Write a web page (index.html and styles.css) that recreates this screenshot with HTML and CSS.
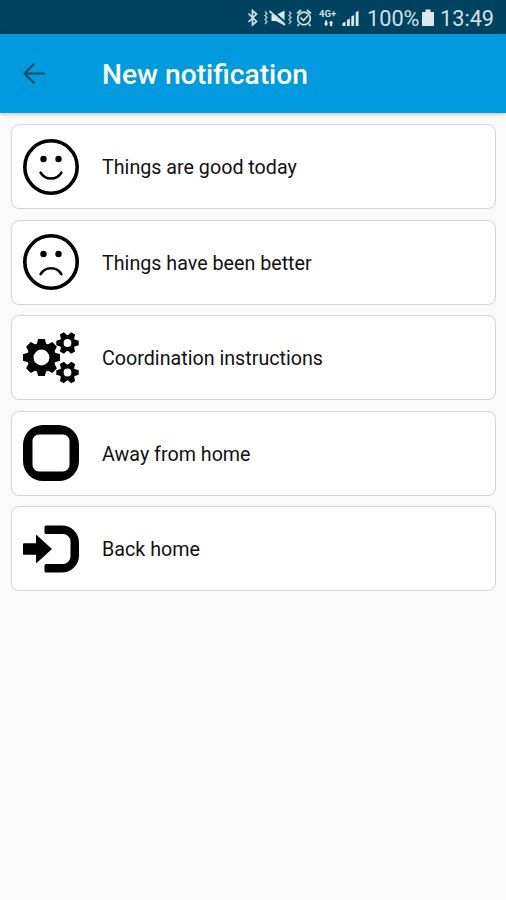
FILE: index.html
```html
<!DOCTYPE html>
<html lang="en">
<head>
<meta charset="utf-8">
<title>New notification</title>
<link rel="stylesheet" href="styles.css">
</head>
<body>
<div class="status">
  <svg class="status-icons" viewBox="0 0 118 34" width="118" height="34">
    <path class="line" d="M2.500 13.500L10.500 21.500L6.500 25V10.500L10.500 14L2.500 22"/>
    <path class="thin" d="M19 11.500l2 2-2 2 2 2-2 2 2 2-2 2.500M43 11.500l2 2-2 2 2 2-2 2 2 2-2 2.500"/>
    <path class="fill" d="M25.500 15h4.500l8.500-4.500v15l-8.500-4.500h-4.500z"/>
    <path class="cut" d="M25.500 10l15 13.500"/>
    <path class="line" d="M23.500 11l15.500 14"/>
    <circle class="line" cx="58" cy="18.500" r="6.300"/>
    <path class="line" d="M51 13.500l4-3.500M65 13.500l-4-3.500M53 24l-1.500 2M63 24l1.500 2M54.500 17.500l3 3 4.500-5"/>
    <text class="net" x="73" y="17">4G+</text>
    <path class="fill" d="M79 20.500h2.200v3h1.200l-2.300 2.800-2.300-2.800H79zM84 26.300h2.200v-3h1.200l-2.300-2.800-2.300 2.800H84z"/>
    <path class="fill" d="M96.500 26v-3l3-1.200V26zM101 26v-6l2.800-1.500V26zM105.300 26v-9.500l2.800-1.500V26zM109.700 26V12.500l2.800-2V26z"/>
  </svg>
  <span class="percent">100%</span>
  <svg class="battery" viewBox="0 0 14 34" width="14" height="34"><path class="fill" d="M1 12h3.500V9.500h5V12H13v14H1z"/></svg>
  <span class="clock">13:49</span>
</div>
<header class="bar">
  <svg class="back" viewBox="0 0 24 24" width="24" height="24"><path d="M23 11.500H2.500M12.500 1.500L2.500 11.500l10 10"/></svg>
  <h1>New notification</h1>
</header>
<main class="list">
  <div class="card">
    <svg class="icon" viewBox="0 0 56 56"><circle class="face" cx="28" cy="28" r="26.200"/><circle cx="20.500" cy="20" r="3.200"/><circle cx="35.500" cy="20" r="3.200"/><path class="mouth" d="M17.600 33.600Q21 39.500 28 39.500T38.400 33.600"/></svg>
    <span>Things are good today</span>
  </div>
  <div class="card">
    <svg class="icon" viewBox="0 0 56 56"><circle class="face" cx="28" cy="28" r="26.200"/><circle cx="20.500" cy="20" r="3.200"/><circle cx="35.500" cy="20" r="3.200"/><path class="mouth" d="M17.600 40.200Q21 34.300 28 34.300T38.400 40.200"/></svg>
    <span>Things have been better</span>
  </div>
  <div class="card">
    <svg class="icon" viewBox="0 0 56 56">
      <defs>
        <path id="tooth" d="M-5.200-12L-3.300-18.500H3.300L5.200-12z"/>
        <path id="cog" d="M-4-5.500L-2.300-11.200H2.300L4-5.500z"/>
        <g id="small-gear">
          <circle class="hub-small" r="5.900"/>
          <use href="#cog" transform="rotate(30)"/><use href="#cog" transform="rotate(90)"/><use href="#cog" transform="rotate(150)"/><use href="#cog" transform="rotate(210)"/><use href="#cog" transform="rotate(270)"/><use href="#cog" transform="rotate(330)"/>
        </g>
      </defs>
      <g transform="translate(18.500 27.500)">
        <circle class="hub" r="11.200"/>
        <use href="#tooth"/><use href="#tooth" transform="rotate(45)"/><use href="#tooth" transform="rotate(90)"/><use href="#tooth" transform="rotate(135)"/><use href="#tooth" transform="rotate(180)"/><use href="#tooth" transform="rotate(225)"/><use href="#tooth" transform="rotate(270)"/><use href="#tooth" transform="rotate(315)"/>
      </g>
      <use href="#small-gear" x="44.500" y="13"/>
      <use href="#small-gear" x="44.500" y="42.500"/>
    </svg>
    <span>Coordination instructions</span>
  </div>
  <div class="card">
    <svg class="icon" viewBox="0 0 56 56"><path fill-rule="evenodd" d="M20 0H36A20 20 0 0 1 56 20V36A20 20 0 0 1 36 56H20A20 20 0 0 1 0 36V20A20 20 0 0 1 20 0zM16 9.500A6.500 6.500 0 0 0 9.500 16V40A6.500 6.500 0 0 0 16 46.500H40A6.500 6.500 0 0 0 46.500 40V16A6.500 6.500 0 0 0 40 9.500z"/></svg>
    <span>Away from home</span>
  </div>
  <div class="card">
    <svg class="icon" viewBox="0 0 56 56"><path d="M1 22.200H13V15Q13 13.500 14.200 14.500L29 28 14.200 41.500Q13 42.500 13 41V33.800H1Q0 33.800 0 32.800V23.200Q0 22.200 1 22.200z"/><path d="M23 4.500H39A17 17 0 0 1 56 21.500V34.500A17 17 0 0 1 39 51.500H23Q21.500 51.500 21.500 50V44.500Q21.500 43 23 43H40A7.500 7.500 0 0 0 47.500 35.500V20.500A7.500 7.500 0 0 0 40 13H23Q21.500 13 21.500 11.500V6Q21.500 4.500 23 4.500z"/></svg>
    <span>Back home</span>
  </div>
</main>
</body>
</html>
```
FILE: styles.css
```css
* { box-sizing: border-box; }
body {
  margin: 0;
  min-height: 900px;
  background: #fafafa;
  font-family: Roboto, "Liberation Sans", sans-serif;
  color: #111;
}
.status {
  height: 34px;
  padding-right: 13px;
  display: flex;
  align-items: center;
  justify-content: flex-end;
  background: #00425f;
  color: #cfe0e8;
  font-size: 21.700px;
  line-height: 34px;
  white-space: nowrap;
}
.status span { padding-top: 3px; }
.percent { width: 52px; margin-left: 3px; }
.clock { width: 53px; margin-left: 5px; }
.battery { margin-left: 2px; }
.fill { fill: #dbeaf0; }
.line { fill: none; stroke: #cfe0e8; stroke-width: 1.7; }
.thin { fill: none; stroke: #b5ccd7; stroke-width: 1.3; }
.cut { fill: none; stroke: #00425f; stroke-width: 2; }
.net { fill: #cfe0e8; font-size: 9.5px; font-weight: 700; }
.bar {
  position: relative;
  height: 79px;
  padding-left: 22px;
  display: flex;
  align-items: center;
  background: #009ade;
  box-shadow: 0 1px 4px rgba(80, 40, 30, .3);
}
.back { fill: none; stroke: #124860; stroke-width: 2.2; }
h1 {
  margin: 3px 0 0 56px;
  color: #fff;
  font-size: 28.200px;
  font-weight: 500;
  line-height: 36px;
}
.list {
  padding: 11px 10px 0 11px;
  display: grid;
  grid-auto-rows: 85px;
  gap: 10.600px;
}
.card {
  padding-left: 11px;
  display: flex;
  align-items: center;
  gap: 23px;
  background: #fff;
  border: 1.500px solid #d6d6d6;
  border-radius: 8px;
  font-size: 19.700px;
}
.card span { padding-top: 2px; }
.icon { width: 56px; height: 56px; fill: #000; overflow: visible; }
.face { fill: none; stroke: #000; stroke-width: 3.600; }
.mouth { fill: none; stroke: #000; stroke-width: 2.600; stroke-linecap: round; }
.hub { fill: none; stroke: #000; stroke-width: 6.500; }
.hub-small { fill: none; stroke: #000; stroke-width: 4; }
```
